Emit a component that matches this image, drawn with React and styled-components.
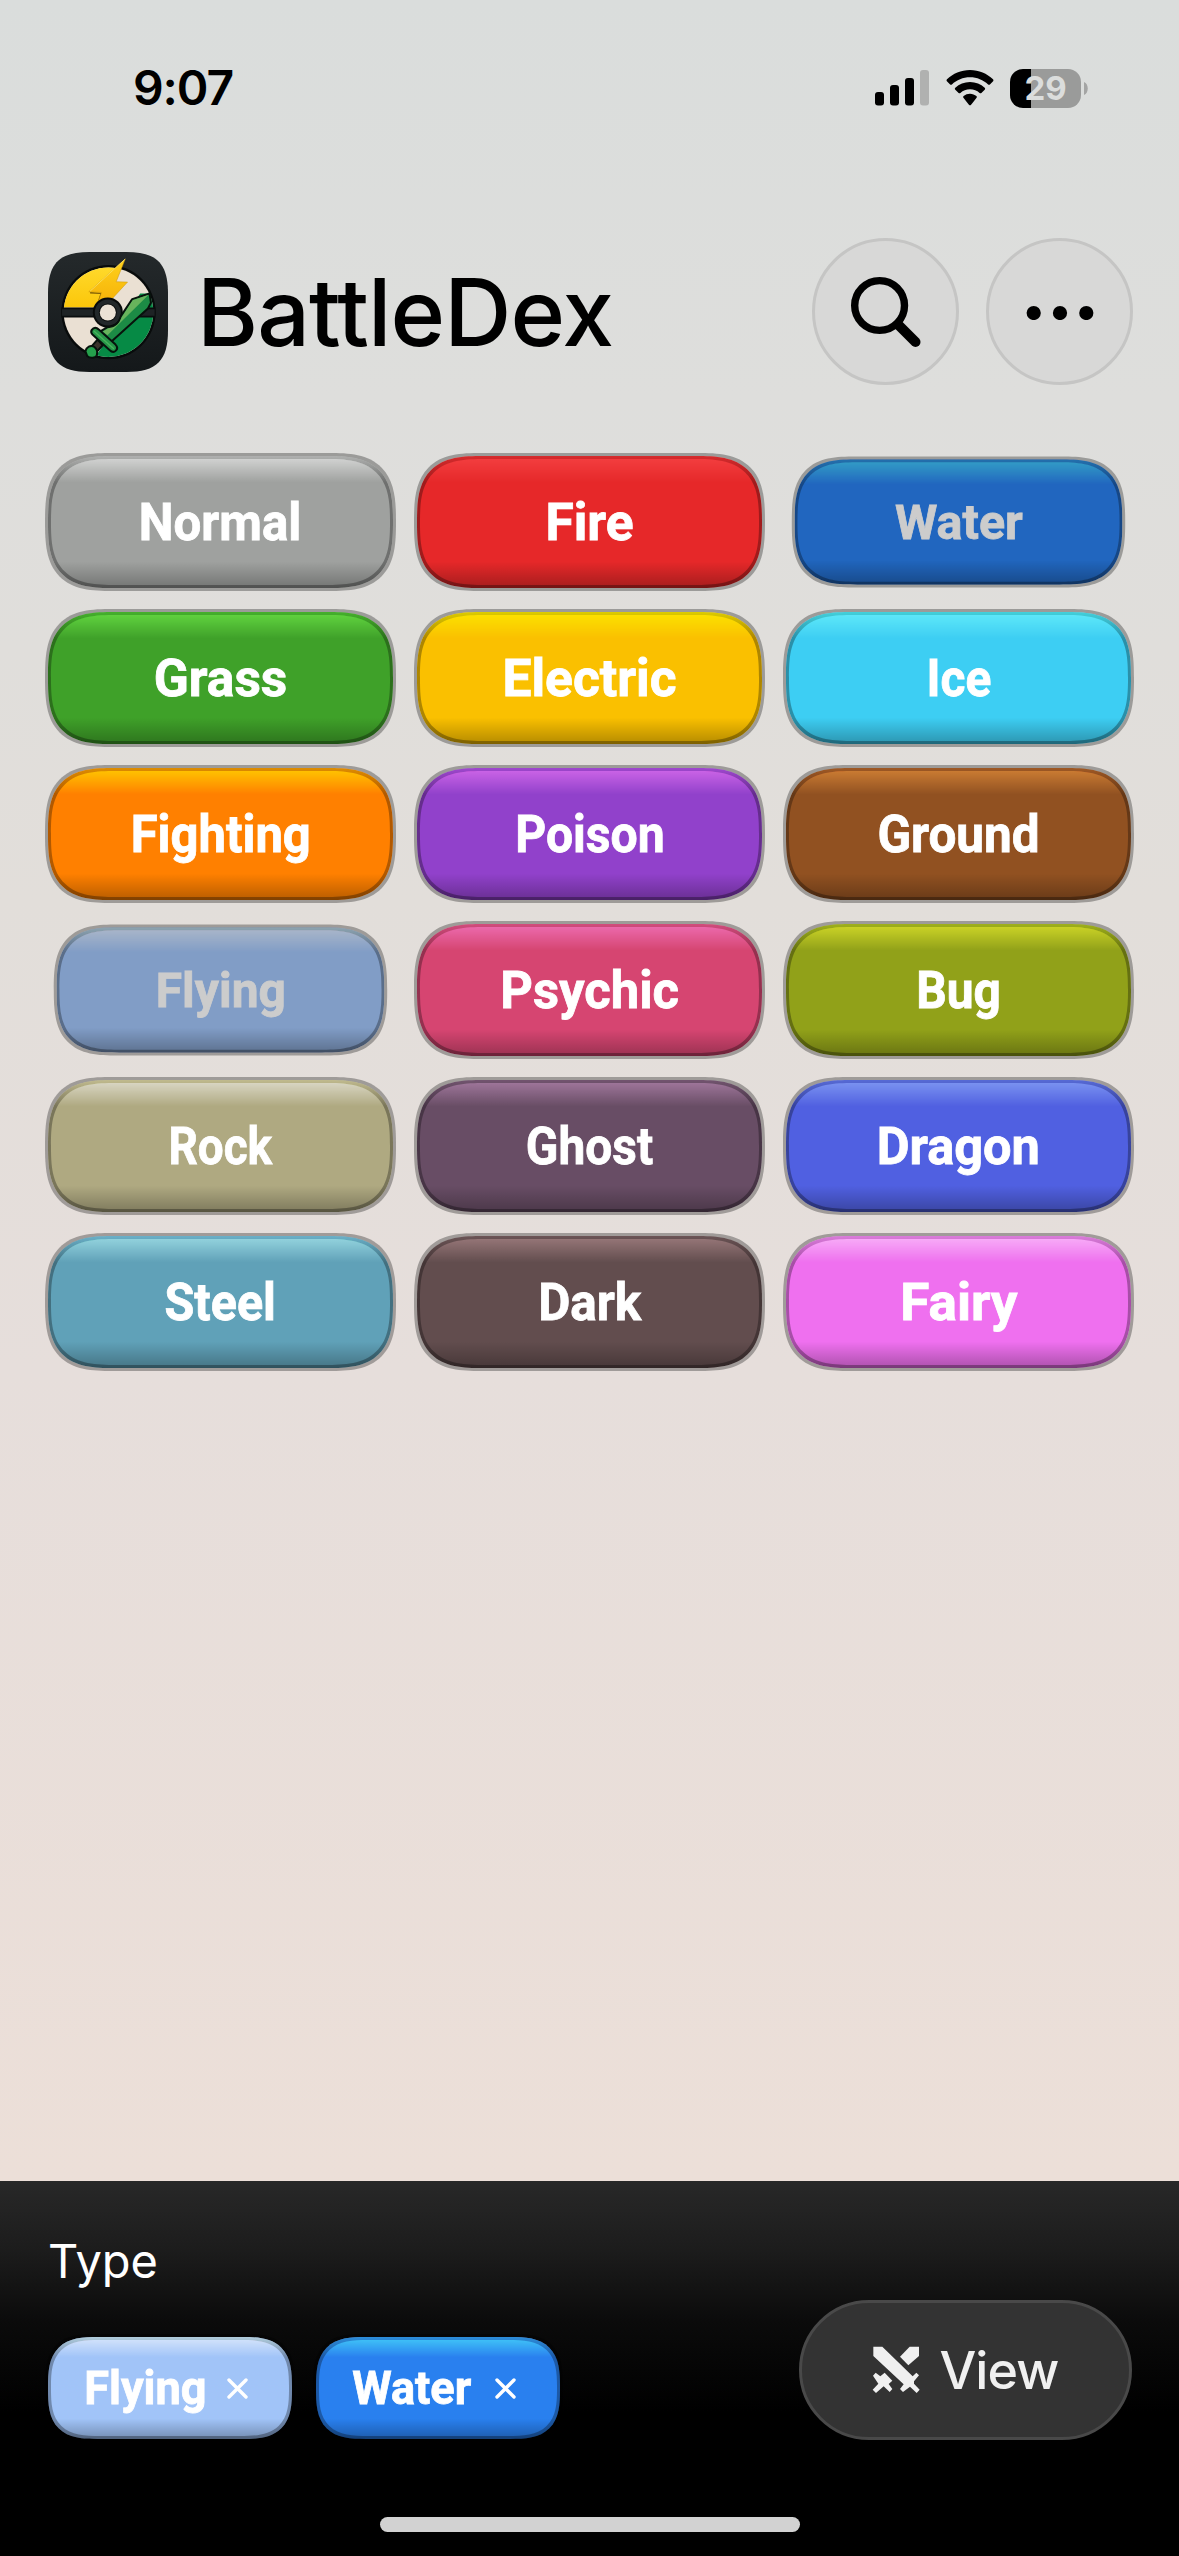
import React from "react";
import styled, { createGlobalStyle, css } from "styled-components";

const sans = `Inter, Roboto, "Liberation Sans", sans-serif`;
const display = `Roboto, "Liberation Sans", sans-serif`;

const Global = createGlobalStyle`
  *, *::before, *::after { box-sizing: border-box; }
  html, body { margin: 0; padding: 0; }
  body { font-family: ${sans}; }
  button { font: inherit; border: 0; margin: 0; padding: 0; background: none; }
`;

const Screen = styled.main`
  display: flex;
  flex-direction: column;
  width: 1179px;
  height: 2556px;
  overflow: hidden;
  color: #000;
  background: linear-gradient(180deg, #dadddc 0, #dededc 400px, #e2deda 900px, #e6dedb 1370px, #ecdfd8 2181px);
`;

const StatusBar = styled.div`
  display: flex;
  align-items: center;
  justify-content: space-between;
  height: 238px;
  padding: 0 91px 62px 133px;
`;

const Clock = styled.time`
  font-size: 48px;
  font-weight: 600;
  line-height: 60px;
  letter-spacing: -1.1px;
`;

const StatusIcons = styled.div`
  display: flex;
  align-items: center;
  gap: 16.5px;
`;

const BatteryShell = styled.div`
  display: flex;
  align-items: center;
  gap: 3px;
`;

const BatteryBody = styled.div`
  display: flex;
  align-items: center;
  justify-content: center;
  width: 71px;
  height: 39px;
  border-radius: 13px;
  background: linear-gradient(90deg, #000 21px, #9a9b9a 21px);
  color: #dbdddc;
  font-size: 33px;
  font-weight: 700;
  line-height: 39px;
`;

const Header = styled.header`
  display: flex;
  align-items: center;
  height: 147px;
  padding: 0 46px 0 48px;
`;

const Title = styled.h1`
  flex: 1;
  margin: 0 0 0 29px;
  font-size: 93px;
  font-weight: 500;
  line-height: 120px;
  letter-spacing: -0.9px;
`;

const Actions = styled.div`
  display: flex;
  gap: 27px;
`;

const RoundButton = styled.button`
  display: flex;
  align-items: center;
  justify-content: center;
  width: 147px;
  height: 147px;
  border: 3px solid #c5c5c4;
  border-radius: 50%;
  background: #d8d8d7;
`;

const TypeGrid = styled.section`
  display: grid;
  grid-template-columns: repeat(3, 345px);
  grid-auto-rows: 132px;
  gap: 24px;
  padding: 71px 48px 0;
`;

const glossy = css`
  position: relative;
  isolation: isolate;
  display: flex;
  align-items: center;
  color: #fff;
  font-family: ${display};
  font-weight: 700;
  background: linear-gradient(0deg, rgba(0, 0, 0, 0.28), rgba(0, 0, 0, 0) 20%), ${(p) => p.$color};
  box-shadow: inset 0 0 0 3px rgba(0, 0, 0, 0.3), 0 0 0 3px rgba(0, 0, 0, 0.3);

  &::after {
    content: "";
    position: absolute;
    inset: 0;
    border-radius: inherit;
    corner-shape: inherit;
    background: linear-gradient(180deg, rgba(255, 255, 255, 0.58), rgba(255, 255, 255, 0) 20%);
    mix-blend-mode: overlay;
  }
`;

const TypeButton = styled.button`
  ${glossy}
  justify-content: center;
  padding-top: 2px;
  border-radius: 52px;
  @supports (corner-shape: squircle) {
    border-radius: 66px;
    corner-shape: superellipse(1.53);
  }
  ${(p) => p.$picked && css`
    transform: scale(0.95);
    filter: brightness(0.8);
  `}
`;

const TypeName = styled.span`
  font-size: 51.5px;
  line-height: 60px;
  transform: scaleX(${(p) => p.$stretch});
  -webkit-text-stroke: 0.8px currentColor;
`;

const Footer = styled.footer`
  display: flex;
  flex-direction: column;
  height: 375px;
  margin-top: auto;
  padding: 50px 48px 24px;
  color: #fff;
  background: linear-gradient(180deg, #282828 0, #1c1c1c 70px, #0b0b0b 140px, #000 230px);
`;

const FooterLabel = styled.div`
  font-size: 47px;
  line-height: 60px;
`;

const FooterRow = styled.div`
  display: flex;
  align-items: flex-end;
  justify-content: space-between;
  height: 149px;
`;

const Chips = styled.div`
  display: flex;
  gap: 24px;
`;

const Chip = styled.button`
  ${glossy}
  justify-content: space-between;
  width: 244px;
  height: 102px;
  margin-bottom: 1px;
  padding: 0 44px 0 35px;
  border-radius: 38px;
  @supports (corner-shape: squircle) {
    border-radius: 50px;
    corner-shape: superellipse(1.53);
  }
`;

const ChipName = styled.span`
  font-size: 46px;
  line-height: 54px;
  transform: scaleX(0.98);
  -webkit-text-stroke: 0.8px currentColor;
`;

const ViewButton = styled.button`
  display: flex;
  align-items: center;
  justify-content: center;
  gap: 19px;
  width: 333px;
  height: 140px;
  margin-right: -1px;
  border: 3px solid #494949;
  border-radius: 70px;
  background: #333;
  color: #f0f0f0;
  font-size: 52px;
  font-weight: 500;
  letter-spacing: -0.9px;
`;

const HomeIndicator = styled.div`
  width: 420px;
  height: 15px;
  margin: auto auto 0;
  border-radius: 8px;
  background: #d2d2d2;
`;

const TYPES = [
  { name: "Normal", color: "#9fa19f", stretch: 0.955 },
  { name: "Fire", color: "#e62829", stretch: 1 },
  { name: "Water", color: "#2980ef", stretch: 0.99, picked: true },
  { name: "Grass", color: "#3fa129", stretch: 1 },
  { name: "Electric", color: "#fac000", stretch: 1 },
  { name: "Ice", color: "#3dcef3", stretch: 0.93 },
  { name: "Fighting", color: "#ff8000", stretch: 0.95 },
  { name: "Poison", color: "#9141cb", stretch: 0.935 },
  { name: "Ground", color: "#915121", stretch: 0.96 },
  { name: "Flying", color: "#a1c4f8", stretch: 0.98, picked: true },
  { name: "Psychic", color: "#d64571", stretch: 0.985 },
  { name: "Bug", color: "#91a119", stretch: 0.93 },
  { name: "Rock", color: "#afa981", stretch: 0.89 },
  { name: "Ghost", color: "#684d65", stretch: 0.93 },
  { name: "Dragon", color: "#5060e1", stretch: 0.98 },
  { name: "Steel", color: "#60a1b8", stretch: 0.94 },
  { name: "Dark", color: "#624d4e", stretch: 0.96 },
  { name: "Fairy", color: "#ef70ef", stretch: 1.03 },
];

const CHIPS = [
  { name: "Flying", color: "#a1c4f8" },
  { name: "Water", color: "#2980ef" },
];

const Signal = () => (
  <svg width="54" height="36" viewBox="0 0 54 36">
    <rect x="0" y="22" width="9" height="13.5" rx="3" />
    <rect x="15" y="15" width="9" height="20.5" rx="3" />
    <rect x="30" y="8" width="9" height="27.5" rx="3" />
    <rect x="45" y="0" width="9" height="35.5" rx="3" fill="#b0b1b0" />
  </svg>
);

const Wifi = () => (
  <svg width="48" height="36" viewBox="0 0 48 36">
    <path d="M24 0C33 0 41 3.6 47 9.3c.6.6.6 1.3.1 1.9l-3.2 3.2c-.5.5-1.2.5-1.8 0C37.300 10 31 7.300 24 7.300S10.700 10 5.900 14.400c-.6.5-1.300.5-1.800 0L.9 11.200c-.5-.6-.5-1.300.1-1.900C7 3.600 15 0 24 0Z" />
    <path d="M24 12c5.700 0 10.800 2.200 14.700 5.800.6.6.6 1.300 0 1.900l-3.300 3.200c-.5.5-1.200.5-1.800 0A14 14 0 0 0 24 19.200a14 14 0 0 0-9.600 3.700c-.6.500-1.300.500-1.800 0l-3.300-3.200c-.6-.6-.6-1.300 0-1.900C13.200 14.200 18.300 12 24 12Z" />
    <path d="M24 23.700c2.500 0 4.700.900 6.400 2.400.6.500.6 1.300 0 1.900l-5.500 6.900c-.5.500-1.300.500-1.800 0L17.600 28c-.6-.6-.6-1.400 0-1.900a9.600 9.600 0 0 1 6.400-2.400Z" />
  </svg>
);

const BatteryTip = () => (
  <svg width="4" height="13" viewBox="0 0 4 13"><path d="M0 0C5 2 5 11 0 13Z" fill="#a4a5a4" /></svg>
);

const Logo = () => (
  <svg width="120" height="120" viewBox="54 66 359 359">
    <defs>
      <linearGradient id="tile" x1="0" y1="0" x2="0" y2="1">
        <stop offset="0" stopColor="#24292b" /><stop offset="1" stopColor="#14181a" />
      </linearGradient>
      <linearGradient id="gold" x1="0" y1="0" x2="0" y2="1">
        <stop offset="0" stopColor="#ffdb2e" /><stop offset="1" stopColor="#fbc60a" />
      </linearGradient>
      <linearGradient id="bolt" x1="0" y1="0" x2="0" y2="1">
        <stop offset="0" stopColor="#ffd21c" /><stop offset="1" stopColor="#f6b40a" />
      </linearGradient>
      <clipPath id="ball"><circle cx="235" cy="246" r="134" /></clipPath>
    </defs>
    <path d="M54 190C54 100 88 66 178 66H289C379 66 413 100 413 190V301C413 391 379 425 289 425H178C88 425 54 391 54 301Z" fill="url(#tile)" />
    <circle cx="235" cy="246" r="141" fill="#080b0b" />
    <g clipPath="url(#ball)">
      <rect x="90" y="100" width="290" height="290" fill="#eae0d3" />
      <path d="M90 232V100H275L214 232Z" fill="url(#gold)" />
      <path d="M180 400 280 262 330 190H380V400Z" fill="#068a45" />
    </g>
    <path d="M94 232H212V262H94Z" fill="#0a0d0e" />
    <path d="M96 237H205V257H96Z" fill="#1e2325" />
    <path d="M318 232H375V262H290Z" fill="#0a0d0e" />
    <path d="M320 237H373V257H302Z" fill="#1e2325" />
    <path d="M180 188 213 190 206 212" fill="none" stroke="#7a5a06" strokeWidth="4" strokeLinejoin="round" />
    <path d="M285 87 176 185 214 187 206 210 242 210 292 156 258 155Z" fill="url(#bolt)" stroke="#c99708" strokeWidth="1.500" strokeLinejoin="round" />
    <path d="M285 87 180 183" stroke="#ffe66a" strokeWidth="2.500" />
    <circle cx="233" cy="247" r="45" fill="#080b0b" />
    <circle cx="233" cy="247" r="39" fill="#22282a" />
    <circle cx="233" cy="247" r="27" fill="#0c0f0f" />
    <circle cx="233" cy="247" r="24" fill="#ebe2d6" />
    <g stroke="#07120c" strokeWidth="6" strokeLinejoin="round">
      <path d="M358 190 362 218 353 235 244 334 208 305 232 291C252 292 266 280 272 258L306 207Z" fill="#1c8b45" />
      <path d="M202 328 218 345 199 365 183 350Z" fill="#3a322b" />
      <path d="M185 299C191 290 199 291 206 298L256 343C262 349 262 356 257 361C251 367 244 365 238 359L187 313C182 308 182 304 185 299Z" fill="#269648" />
      <path d="M166 363C169 350 181 343 193 350C202 357 203 364 200 375C196 384 180 385 171 377Z" fill="#25a04c" />
    </g>
    <path d="M355 194 307 210 274 262C266 284 254 292 234 294L218 304 232 315Z" fill="#68b35c" />
    <path d="M192 303 250 355" stroke="#49b45c" strokeWidth="4" strokeLinecap="round" />
  </svg>
);

const SearchIcon = () => (
  <svg width="72" height="72" viewBox="0 0 72 72" fill="none" stroke="#000">
    <circle cx="29.600" cy="29.500" r="24.900" strokeWidth="7.400" />
    <path d="M48 48.500 65.500 66" strokeWidth="10" strokeLinecap="round" />
  </svg>
);

const MoreIcon = () => (
  <svg width="68" height="16" viewBox="0 0 68 16">
    <circle cx="7.700" cy="9" r="7.100" /><circle cx="34" cy="9" r="7.100" /><circle cx="60.300" cy="9" r="7.100" />
  </svg>
);

const CloseIcon = () => (
  <svg width="21" height="21" viewBox="0 0 21 21" fill="none" stroke="#fff" strokeWidth="3.400" strokeLinecap="round">
    <path d="M2 2 19 19M19 2 2 19" />
  </svg>
);

const SwordsIcon = () => (
  <svg width="48" height="48" viewBox="305 231 144 144" fill="#f0f0f0">
    <path d="M309 233H336L427 322 438 311 446 319 431 337V344L448 362 439 372 419 353 398 369 389 360 400 346 309 261Z" />
    <path d="M418 233H446V261L414 289 389 263Z" />
    <path d="M308 320 316 311 330 322 343 311 366 335 355 345 366 360 358 369 340 352 317 372 307 362 324 344Z" />
  </svg>
);

export default function App() {
  return (
    <>
      <Global />
      <Screen>
        <StatusBar>
          <Clock>9:07</Clock>
          <StatusIcons>
            <Signal />
            <Wifi />
            <BatteryShell>
              <BatteryBody>29</BatteryBody>
              <BatteryTip />
            </BatteryShell>
          </StatusIcons>
        </StatusBar>
        <Header>
          <Logo />
          <Title>BattleDex</Title>
          <Actions>
            <RoundButton aria-label="Search"><SearchIcon /></RoundButton>
            <RoundButton aria-label="More"><MoreIcon /></RoundButton>
          </Actions>
        </Header>
        <TypeGrid>
          {TYPES.map((t) => (
            <TypeButton key={t.name} $color={t.color} $picked={t.picked}>
              <TypeName $stretch={t.stretch}>{t.name}</TypeName>
            </TypeButton>
          ))}
        </TypeGrid>
        <Footer>
          <FooterLabel>Type</FooterLabel>
          <FooterRow>
            <Chips>
              {CHIPS.map((c) => (
                <Chip key={c.name} $color={c.color}>
                  <ChipName>{c.name}</ChipName>
                  <CloseIcon />
                </Chip>
              ))}
            </Chips>
            <ViewButton>
              <SwordsIcon />
              View
            </ViewButton>
          </FooterRow>
          <HomeIndicator />
        </Footer>
      </Screen>
    </>
  );
}
